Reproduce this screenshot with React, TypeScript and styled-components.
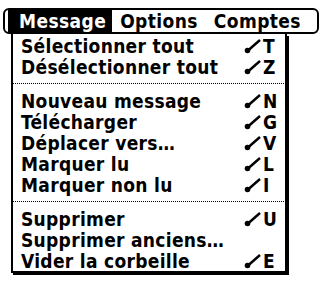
import React from 'react';
import styled, { createGlobalStyle } from 'styled-components';

const GlobalStyle = createGlobalStyle`
  html, body {
    margin: 0;
    padding: 0;
    background: #fff;
  }
  body {
    font-family: "DejaVu Sans Condensed", "DejaVu Sans", "Liberation Sans", sans-serif;
    font-weight: 700;
    color: #000;
  }
`;

const Screen = styled.div`
  width: 325px;
  height: 284px;
  padding-top: 8px;
  box-sizing: border-box;
`;

const MenuBar = styled.div`
  margin-left: 3px;
  width: 316px;
  height: 26px;
  box-sizing: border-box;
  border: 2px solid #000;
  border-radius: 6px;
  display: flex;
  align-items: stretch;
  padding-left: 3px;
`;

const BarItem = styled.div<{ $active?: boolean }>`
  display: flex;
  align-items: center;
  padding: ${(p) => (p.$active ? '0 6px 0 11px' : '0 8px')};
  font-size: 19px;
  letter-spacing: 0.4px;
  background: ${(p) => (p.$active ? '#000' : 'transparent')};
  color: ${(p) => (p.$active ? '#fff' : '#000')};
`;

const Dropdown = styled.div`
  margin-left: 11px;
  width: 276px;
  box-sizing: border-box;
  border: 2px solid #000;
  border-top: none;
  box-shadow: 2px 2px 0 #000;
  padding-top: 1px;
`;

const Row = styled.div`
  height: 21px;
  display: flex;
  align-items: center;
  justify-content: space-between;
  padding: 0 7px 0 8px;
  font-size: 19px;
  letter-spacing: 0.3px;
  white-space: nowrap;
`;

const Shortcut = styled.span`
  display: flex;
  align-items: center;
  gap: 1px;
  width: 34px;
`;

const Separator = styled.div`
  height: 13px;
  display: flex;
  align-items: center;
`;

const Dots = styled.div`
  width: 100%;
  height: 1px;
  background-image: linear-gradient(to right, #000 50%, transparent 50%);
  background-size: 2px 1px;
`;

const Stroke = () => (
  <svg width="18" height="16" viewBox="0 0 18 16">
    <line x1="4" y1="12.5" x2="16" y2="2" stroke="#000" strokeWidth="2.4" />
    <circle cx="3.5" cy="12.5" r="2.8" fill="#000" />
  </svg>
);

type Item = { label: string; key?: string } | 'sep';

const items: Item[] = [
  { label: 'Sélectionner tout', key: 'T' },
  { label: 'Désélectionner tout', key: 'Z' },
  'sep',
  { label: 'Nouveau message', key: 'N' },
  { label: 'Télécharger', key: 'G' },
  { label: 'Déplacer vers…', key: 'V' },
  { label: 'Marquer lu', key: 'L' },
  { label: 'Marquer non lu', key: 'I' },
  'sep',
  { label: 'Supprimer', key: 'U' },
  { label: 'Supprimer anciens…' },
  { label: 'Vider la corbeille', key: 'E' },
];

export default function App() {
  return (
    <Screen>
      <GlobalStyle />
      <MenuBar>
        <BarItem $active>Message</BarItem>
        <BarItem>Options</BarItem>
        <BarItem>Comptes</BarItem>
      </MenuBar>
      <Dropdown>
        {items.map((it, i) =>
          it === 'sep' ? (
            <Separator key={i}>
              <Dots />
            </Separator>
          ) : (
            <Row key={i}>
              <span>{it.label}</span>
              {it.key && (
                <Shortcut>
                  <Stroke />
                  {it.key}
                </Shortcut>
              )}
            </Row>
          )
        )}
      </Dropdown>
    </Screen>
  );
}
